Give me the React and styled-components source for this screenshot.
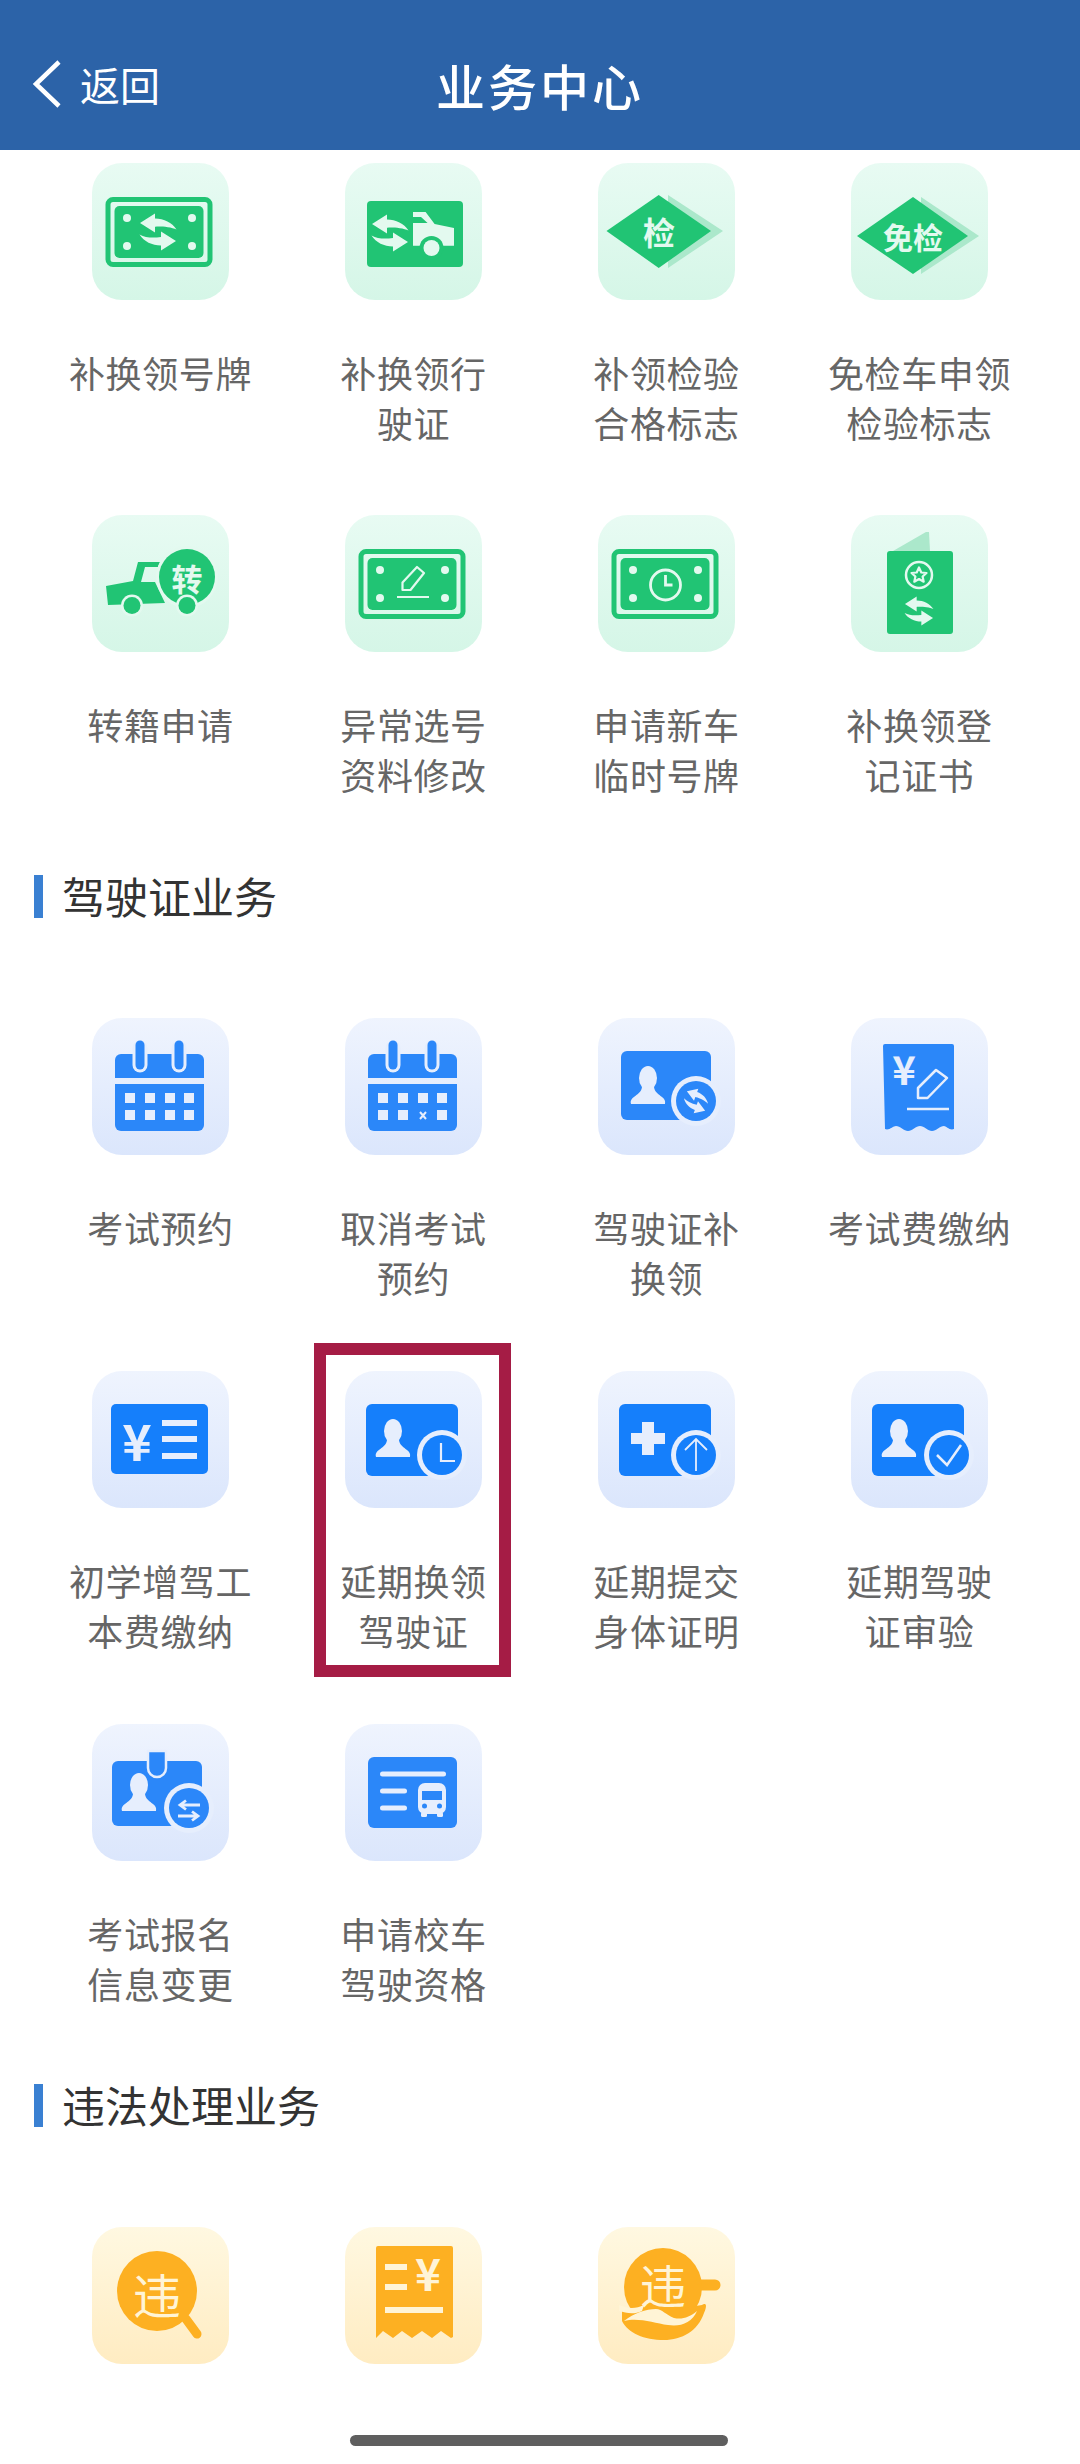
import React from 'react';
import styled, { createGlobalStyle } from 'styled-components';

const GREEN = '#21c474';
const GREEN_SOFT = '#abe8cb';
const GREEN_PALE = '#e3f9ef';
const BLUE = '#2b87f9';
const BLUE_DEEP = '#157ffb';
const BLUE_PALE = '#e6eefd';
const AMBER = '#fdb022';
const AMBER_PALE = '#fff4d6';

const tones = {
  green: 'linear-gradient(180deg, #e8fbf3 0%, #d5f6e7 100%)',
  blue: 'linear-gradient(180deg, #eff4fe 0%, #dbe6fc 100%)',
  amber: 'linear-gradient(180deg, #fff8e1 0%, #ffecc2 100%)',
};

const Swap = ({ x, y, s = 1, r = 0, fill }) => (
  <g transform={`translate(${x} ${y}) rotate(${r}) scale(${s})`} fill={fill}>
    <path d="M-18-9-3-18.5V-13.5C6-13.5 14-9.5 18.500-2.500 12-6-5-6-3-5V0.500Z" />
    <path d="M18 9 3 18.500V13.500C-6 13.500-14 9.500-18.500 2.500-12 6-5 6 3 5V-0.500Z" />
  </g>
);

const Bill = ({ children }) => (
  <>
    <rect x="16" y="36.500" width="102" height="65" rx="5" fill="none" stroke={GREEN} strokeWidth="5" />
    <rect x="22.500" y="43" width="89" height="52" rx="5" fill={GREEN} />
    {[[35, 55], [100, 55], [35, 83], [100, 83]].map(([cx, cy]) => (
      <circle key={`${cx}-${cy}`} cx={cx} cy={cy} r="4" fill={GREEN_PALE} />
    ))}
    {children}
  </>
);

const Person = ({ cx, cy, fill }) => (
  <g fill={fill}>
    <ellipse cx={cx} cy={cy} rx="9" ry="12" />
    <path d={`M${cx - 17} ${cy + 26}C${cx - 19} ${cy + 18} ${cx - 7} ${cy + 18} ${cx - 6} ${cy + 9}H${cx + 6}C${cx + 7} ${cy + 18} ${cx + 19} ${cy + 18} ${cx + 17} ${cy + 26}Z`} />
  </g>
);

const Badge = ({ cx = 97, cy = 84, fill, children }) => (
  <>
    <circle cx={cx} cy={cy} r="25" fill={BLUE_PALE} />
    <circle cx={cx} cy={cy} r="20" fill={fill} />
    {children}
  </>
);

const LicenceCard = ({ children }) => (
  <>
    <rect x="21" y="33" width="92" height="72" rx="6" fill={BLUE_DEEP} />
    <Person cx={48} cy={60} fill={BLUE_PALE} />
    {children}
  </>
);

const Calendar = ({ cancelled }) => (
  <>
    <path d="M23 42a6 6 0 0 1 6-6h77a6 6 0 0 1 6 6v18H23Z" fill={BLUE} />
    <path d="M23 66h89v41a6 6 0 0 1-6 6H29a6 6 0 0 1-6-6Z" fill={BLUE} />
    {[48, 87].map((x) => (
      <g key={x} strokeLinecap="round">
        <line x1={x} y1="30" x2={x} y2="47" stroke={BLUE_PALE} strokeWidth="15" />
        <line x1={x} y1="27" x2={x} y2="47" stroke={BLUE} strokeWidth="9" />
      </g>
    ))}
    {[75, 92].map((y) =>
      [33, 53, 73, 92].map((x) =>
        cancelled && y === 92 && x === 73 ? (
          <path key={x} d="M75 94l6 7m0-7-6 7" stroke={BLUE_PALE} strokeWidth="2" />
        ) : (
          <rect key={`${x}-${y}`} x={x} y={y} width="10" height="10" fill={BLUE_PALE} />
        ),
      ),
    )}
  </>
);

const icons = {
  plate: (
    <Bill>
      <Swap x={66} y={69} fill={GREEN_PALE} />
    </Bill>
  ),
  truckSwap: (
    <>
      <rect x="22" y="38" width="96" height="66" rx="4" fill={GREEN} />
      <Swap x={45} y={70} fill={GREEN_PALE} />
      <path d="M68 49H80.600L89.600 61 109 65V82.700H68V60H82.600L76 54H68Z" fill={GREEN_PALE} />
      <circle cx="86.500" cy="85" r="12" fill={GREEN} />
      <circle cx="86.500" cy="85" r="8" fill={GREEN_PALE} />
    </>
  ),
  inspect: (
    <>
      <path d="M70 32 125 68 70 105Z" fill={GREEN_SOFT} />
      <path d="M8.500 68 60.700 32 113 68 60.700 105Z" fill={GREEN} />
      <Glyph x={61} y={68} size={32} fill={GREEN_PALE}>检</Glyph>
    </>
  ),
  exempt: (
    <>
      <path d="M70 34 128 73 70 111Z" fill={GREEN_SOFT} />
      <path d="M6 73 62 34 117 73 62 111Z" fill={GREEN} />
      <Glyph x={62} y={73} size={30} fill={GREEN_PALE}>免检</Glyph>
    </>
  ),
  transfer: (
    <>
      <path d="M14 71 41 66 46 47H68L66 52H53L49 67H63L73 88 16 90Z" fill={GREEN} />
      <circle cx="95" cy="62" r="31" fill={GREEN_PALE} />
      <circle cx="95" cy="62" r="28" fill={GREEN} />
      <circle cx="40" cy="90.500" r="11" fill={GREEN_PALE} />
      <circle cx="40" cy="90.500" r="8.500" fill={GREEN} />
      <circle cx="95" cy="90.500" r="11" fill={GREEN_PALE} />
      <circle cx="95" cy="90.500" r="8.500" fill={GREEN} />
      <Glyph x={95} y={62} size={31} fill={GREEN_PALE}>转</Glyph>
    </>
  ),
  editBill: (
    <Bill>
      <path d="M57.500 75V67.500L72 52 79 58 65.500 75Z" fill="none" stroke={GREEN_PALE} strokeWidth="2.200" strokeLinejoin="round" />
      <line x1="52" y1="82" x2="84" y2="82" stroke={GREEN_PALE} strokeWidth="2" />
    </Bill>
  ),
  clockBill: (
    <Bill>
      <circle cx="67.500" cy="70" r="15" fill="none" stroke={GREEN_PALE} strokeWidth="2.800" />
      <path d="M67.500 60V70H74.500" fill="none" stroke={GREEN_PALE} strokeWidth="2.800" />
    </Bill>
  ),
  passport: (
    <>
      <path d="M42 36 75 17H78L79 36Z" fill={GREEN_SOFT} />
      <rect x="36" y="36" width="66" height="83" rx="3" fill={GREEN} />
      <circle cx="68" cy="60" r="13" fill="none" stroke={GREEN_PALE} strokeWidth="2.500" />
      <path d="M68 52.500 70.300 57.500 75.500 58 71.600 61.500 72.700 66.700 68 64 63.300 66.700 64.400 61.500 60.500 58 65.700 57.500Z" fill="none" stroke={GREEN_PALE} strokeWidth="2.200" strokeLinejoin="round" />
      <Swap x={68} y={96} s={0.78} fill={GREEN_PALE} />
    </>
  ),
  calendar: <Calendar />,
  calendarCancel: <Calendar cancelled />,
  cardSwap: (
    <>
      <rect x="23" y="33" width="90" height="69" rx="6" fill={BLUE} />
      <Person cx={50} cy={60} fill={BLUE_PALE} />
      <Badge cx={98} cy={83} fill={BLUE}>
        <Swap x={98} y={83} s={0.66} r={20} fill={BLUE_PALE} />
      </Badge>
    </>
  ),
  examFee: (
    <>
      <path d="M32 28a2 2 0 0 1 2-2h67a2 2 0 0 1 2 2v83c-4 2-8-3-10-3-4 0-8 5-12 5s-8-5-12-5-8 5-12 5-8-5-12-5c-3 0-7 5-11 3Z" fill={BLUE} />
      <Glyph x={53} y={50} size={40} fill={BLUE_PALE}>¥</Glyph>
      <path d="M67 80V70L85 52 96 60 76.500 80Z" fill="none" stroke={BLUE_PALE} strokeWidth="2.500" strokeLinejoin="round" />
      <line x1="56" y1="91" x2="98" y2="91" stroke={BLUE_PALE} strokeWidth="2.500" />
    </>
  ),
  bookFee: (
    <>
      <rect x="19" y="33" width="97" height="70" rx="5" fill={BLUE_DEEP} />
      <Glyph x={45} y={68} size={50} fill={BLUE_PALE}>¥</Glyph>
      <rect x="70" y="49" width="35" height="6" fill={BLUE_PALE} />
      <rect x="70" y="65" width="35" height="6" fill={BLUE_PALE} />
      <rect x="70" y="82" width="35" height="6" fill={BLUE_PALE} />
    </>
  ),
  clockCard: (
    <LicenceCard>
      <Badge fill={BLUE_DEEP}>
        <path d="M96 72V90H110" fill="none" stroke={BLUE_PALE} strokeWidth="2.200" />
      </Badge>
    </LicenceCard>
  ),
  uploadCard: (
    <>
      <rect x="21" y="33" width="92" height="72" rx="6" fill={BLUE_DEEP} />
      <path d="M44 51H56V62H67V73H56V84H44V73H33V62H44Z" fill={BLUE_PALE} />
      <Badge cx={98} fill={BLUE_DEEP}>
        <path d="M98 100V69M87 79 98 68 109 79" fill="none" stroke={BLUE_PALE} strokeWidth="1.800" />
      </Badge>
    </>
  ),
  checkCard: (
    <LicenceCard>
      <Badge cx={98} fill={BLUE_DEEP}>
        <path d="M86 84 96 94 110 74" fill="none" stroke={BLUE_PALE} strokeWidth="2.500" />
      </Badge>
    </LicenceCard>
  ),
  idSwap: (
    <>
      <rect x="20" y="37" width="90" height="65" rx="6" fill={BLUE} />
      <path d="M56 27H74V44a9 9 0 0 1-18 0Z" fill={BLUE} stroke={BLUE_PALE} strokeWidth="2.500" />
      <Person cx={47} cy={61} fill={BLUE_PALE} />
      <Badge cx={97} fill={BLUE}>
        <path d="M108 81H89M94 76.500 88 81 94 85.500M86 92H105M100 87.500 106 92 100 96.500" fill="none" stroke={BLUE_PALE} strokeWidth="2.800" />
      </Badge>
    </>
  ),
  busCard: (
    <>
      <rect x="23" y="33" width="89" height="71" rx="6" fill={BLUE} />
      <rect x="35" y="47.500" width="66" height="5" rx="2.500" fill={BLUE_PALE} />
      <rect x="35" y="64.500" width="27" height="5" rx="2.500" fill={BLUE_PALE} />
      <rect x="35" y="81.500" width="27" height="5" rx="2.500" fill={BLUE_PALE} />
      <rect x="73" y="59" width="28" height="31" rx="7" fill={BLUE_PALE} />
      <rect x="76" y="88" width="6" height="5" rx="1.500" fill={BLUE_PALE} />
      <rect x="92" y="88" width="6" height="5" rx="1.500" fill={BLUE_PALE} />
      <rect x="77" y="67" width="20" height="9" fill={BLUE} />
      <circle cx="79.500" cy="82" r="2.500" fill={BLUE} />
      <circle cx="94.500" cy="82" r="2.500" fill={BLUE} />
    </>
  ),
  violationQuery: (
    <>
      <line x1="94" y1="92" x2="105" y2="107" stroke={AMBER} strokeWidth="9" strokeLinecap="round" />
      <ellipse cx="65" cy="64" rx="40" ry="40" fill={AMBER} />
      <Glyph x={65} y={66} size={48} weight={400} fill={AMBER_PALE}>违</Glyph>
    </>
  ),
  violationFee: (
    <>
      <path d="M31 21a2 2 0 0 1 2-2h73a2 2 0 0 1 2 2v89l-2 1-10-7-9 7-10-7-10 7-10-7-9 7-10-7-7 7Z" fill={AMBER} />
      <rect x="40" y="37" width="22" height="6" fill={AMBER_PALE} />
      <rect x="40" y="57" width="22" height="6" fill={AMBER_PALE} />
      <rect x="40" y="80" width="58" height="6" fill={AMBER_PALE} />
      <Glyph x={83} y={45} size={44} fill={AMBER_PALE}>¥</Glyph>
    </>
  ),
  violationPay: (
    <>
      <line x1="100" y1="58" x2="117" y2="58" stroke={AMBER} strokeWidth="11" strokeLinecap="round" />
      <ellipse cx="65" cy="60" rx="39" ry="39" fill={AMBER} />
      <Glyph x={65} y={56} size={46} weight={400} fill={AMBER_PALE}>违</Glyph>
      <path d="M24 82C36 86 50 84 66 84L104 78C110 74 108 82 106 86 100 104 84 113 66 113 46 113 30 106 24 94Z" fill={AMBER} />
      <path d="M21 78C30 82 38 82 46 78L44 84C36 88 28 86 21 84Z" fill={AMBER_PALE} />
      <path d="M26 94C36 86 48 82 58 82 64 82 68 88 76 91 84 93 92 90 99 84 94 96 82 100 70 98 56 96 40 90 26 94Z" fill={AMBER_PALE} />
    </>
  ),
};

const vehicleItems = [
  { icon: 'plate', label: '补换领号牌' },
  { icon: 'truckSwap', label: '补换领行\n驶证' },
  { icon: 'inspect', label: '补领检验\n合格标志' },
  { icon: 'exempt', label: '免检车申领\n检验标志' },
  { icon: 'transfer', label: '转籍申请' },
  { icon: 'editBill', label: '异常选号\n资料修改' },
  { icon: 'clockBill', label: '申请新车\n临时号牌' },
  { icon: 'passport', label: '补换领登\n记证书' },
];

const licenceItems = [
  { icon: 'calendar', label: '考试预约' },
  { icon: 'calendarCancel', label: '取消考试\n预约' },
  { icon: 'cardSwap', label: '驾驶证补\n换领' },
  { icon: 'examFee', label: '考试费缴纳' },
  { icon: 'bookFee', label: '初学增驾工\n本费缴纳' },
  { icon: 'clockCard', label: '延期换领\n驾驶证', highlighted: true },
  { icon: 'uploadCard', label: '延期提交\n身体证明' },
  { icon: 'checkCard', label: '延期驾驶\n证审验' },
  { icon: 'idSwap', label: '考试报名\n信息变更' },
  { icon: 'busCard', label: '申请校车\n驾驶资格' },
];

const violationItems = [
  { icon: 'violationQuery', label: '' },
  { icon: 'violationFee', label: '' },
  { icon: 'violationPay', label: '' },
];

function Services({ items, tone, rowHeight }) {
  return (
    <Grid $rowHeight={rowHeight}>
      {items.map(({ icon, label, highlighted }) => (
        <Cell key={icon}>
          {highlighted && <Highlight />}
          <Tile $tone={tone}>
            <IconSvg viewBox="0 0 137 137">{icons[icon]}</IconSvg>
          </Tile>
          {label && <Label>{label}</Label>}
        </Cell>
      ))}
    </Grid>
  );
}

function App() {
  return (
    <Page>
      <GlobalStyle />
      <Header>
        <BackButton>
          <svg width="32" height="50" viewBox="0 0 32 50">
            <path d="M29 3 6 25 29 47" fill="none" stroke="#fff" strokeWidth="4.500" />
          </svg>
          <BackText>返回</BackText>
        </BackButton>
        <Title>业务中心</Title>
      </Header>
      <FirstBlock>
        <Services items={vehicleItems} tone="green" rowHeight={352} />
      </FirstBlock>
      <SectionHead $gap={8}>驾驶证业务</SectionHead>
      <Services items={licenceItems} tone="blue" rowHeight={353} />
      <SectionHead $gap={7}>违法处理业务</SectionHead>
      <Services items={violationItems} tone="amber" rowHeight={137} />
      <HomeBar />
    </Page>
  );
}

function Glyph({ x, y, size, weight = 700, fill, children }) {
  return (
    <GlyphText x={x} y={y} fontSize={size} fontWeight={weight} fill={fill} textAnchor="middle" dominantBaseline="central">
      {children}
    </GlyphText>
  );
}

const GlobalStyle = createGlobalStyle`
  * {
    box-sizing: border-box;
  }

  body {
    margin: 0;
    background: #fff;
    font-family: "Noto Sans CJK SC", "Liberation Sans", sans-serif;
  }
`;

const Page = styled.div`
  position: relative;
  width: 1080px;
  height: 2464px;
  overflow: hidden;
  background: #fff;
`;

const Header = styled.header`
  display: grid;
  grid-template-columns: 1fr auto 1fr;
  align-items: center;
  height: 150px;
  padding-top: 18px;
  background: #2c63a8;
  color: #fff;
`;

const BackButton = styled.div`
  display: flex;
  align-items: center;
  gap: 18px;
  padding-left: 30px;
`;

const BackText = styled.span`
  font-size: 40px;
  line-height: 1;
`;

const Title = styled.h1`
  margin: 0;
  font-size: 49px;
  font-weight: 500;
  letter-spacing: 3px;
  line-height: 1;
`;

const FirstBlock = styled.div`
  padding-top: 13px;
`;

const Grid = styled.div`
  display: grid;
  grid-template-columns: repeat(4, 253px);
  grid-auto-rows: ${({ $rowHeight }) => $rowHeight}px;
  padding-left: 34px;
`;

const Cell = styled.div`
  position: relative;
  display: flex;
  flex-direction: column;
  align-items: center;
`;

const Tile = styled.div`
  flex: none;
  width: 137px;
  height: 137px;
  border-radius: 30px;
  background: ${({ $tone }) => tones[$tone]};
`;

const IconSvg = styled.svg`
  display: block;
  width: 137px;
  height: 137px;
`;

const GlyphText = styled.text`
  font-family: "Noto Sans CJK SC", sans-serif;
`;

const Label = styled.div`
  margin-top: 47px;
  color: #666;
  font-size: 36px;
  letter-spacing: 0.6px;
  line-height: 50px;
  text-align: center;
  white-space: pre-line;
`;

const Highlight = styled.div`
  position: absolute;
  top: -28px;
  left: 27px;
  width: 197px;
  height: 334px;
  border: 12px solid #a51c45;
`;

const SectionHead = styled.h2`
  height: 43px;
  margin: ${({ $gap }) => $gap}px 0 100px 34px;
  padding-left: 19px;
  border-left: 9px solid #3a80d2;
  color: #333;
  font-size: 43px;
  font-weight: 400;
  line-height: 41px;
`;

const HomeBar = styled.div`
  position: absolute;
  left: 350px;
  bottom: 18px;
  width: 378px;
  height: 11px;
  border-radius: 6px;
  background: #5f5f5f;
`;

export default App;
